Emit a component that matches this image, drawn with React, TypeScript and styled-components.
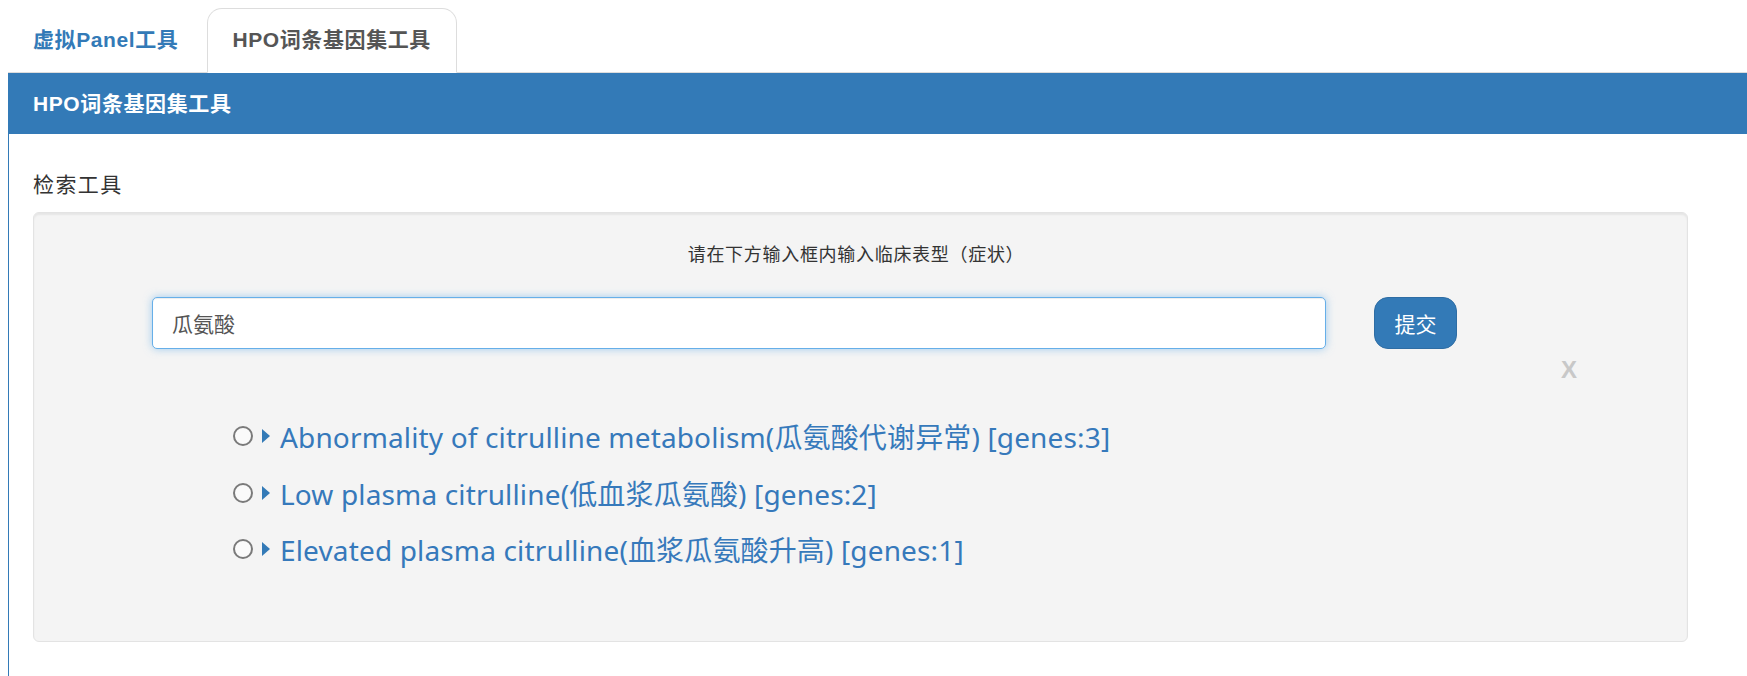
import React from "react";
import styled, { createGlobalStyle } from "styled-components";

const GlobalStyle = createGlobalStyle`
  html, body {
    margin: 0;
    padding: 0;
    background: #fff;
    overflow-x: hidden;
  }
  body {
    font-family: "Liberation Sans", "Noto Sans CJK SC", sans-serif;
    color: #333;
  }
  * { box-sizing: border-box; }
`;

const Page = styled.div`
  padding: 8px 0 0 8px;
  height: 676px;
  overflow: hidden;
`;

const TabList = styled.ul`
  display: flex;
  list-style: none;
  margin: 0;
  padding: 0;
  border-bottom: 1px solid #ddd;
  height: 65px;
`;

const Tab = styled.li<{ $active?: boolean }>`
  margin-right: 3px;
  margin-bottom: -1px;
  padding: 16px 25px 17px 24px;
  height: 65px;
  line-height: 30px;
  font-size: 21px;
  font-weight: bold;
  letter-spacing: 0.6px;
  border: 1px solid ${(p) => (p.$active ? "#ddd" : "transparent")};
  border-bottom-color: transparent;
  border-radius: 15px 15px 0 0;
  background: ${(p) => (p.$active ? "#fff" : "transparent")};
  color: ${(p) => (p.$active ? "#555" : "#337ab7")};
  cursor: pointer;
`;

const Panel = styled.div`
  border-left: 1px solid #337ab7;
`;

const PanelHeading = styled.div`
  background: #337ab7;
  color: #fff;
  height: 61px;
  line-height: 62px;
  padding: 0 24px;
  font-size: 21px;
  font-weight: bold;
  letter-spacing: 0.6px;
`;

const PanelBody = styled.div`
  padding: 36px 59px 60px 24px;
`;

const SectionLabel = styled.div`
  font-size: 21px;
  line-height: 30px;
  letter-spacing: 1.4px;
  color: #333;
  margin-bottom: 12px;
`;

const Well = styled.div`
  background: #f4f4f4;
  border: 1px solid #e3e3e3;
  border-radius: 6px;
  box-shadow: inset 0 2px 2px rgba(0, 0, 0, 0.06);
  padding: 29px 0 63px;
`;

const Instruction = styled.div`
  text-align: center;
  font-size: 18px;
  line-height: 26px;
  letter-spacing: 0.7px;
  color: #333;
  padding-right: 9px;
`;

const SearchRow = styled.div`
  display: flex;
  align-items: center;
  gap: 48px;
  margin: 29px 0 0 118px;
`;

const SearchInput = styled.input`
  width: 1174px;
  height: 52px;
  padding: 0 19px;
  font-family: "Liberation Sans", "Noto Sans CJK SC", sans-serif;
  font-size: 21px;
  color: #555;
  background: #fff;
  border: 1px solid #66afe9;
  border-radius: 5px;
  outline: none;
  box-shadow: inset 0 1px 1px rgba(0, 0, 0, 0.075), 0 0 8px rgba(102, 175, 233, 0.6);
`;

const SubmitButton = styled.button`
  width: 83px;
  height: 52px;
  border: 1px solid #2e6da4;
  border-radius: 14px;
  background: #337ab7;
  color: #fff;
  font-family: "Liberation Sans", "Noto Sans CJK SC", sans-serif;
  font-size: 21px;
  cursor: pointer;
`;

const CloseRow = styled.div`
  display: flex;
  justify-content: flex-end;
  margin: 8px 110px 0 0;
`;

const CloseMark = styled.span`
  font-family: "Liberation Sans", sans-serif;
  font-size: 24px;
  line-height: 26px;
  font-weight: bold;
  color: #c8c8c8;
  cursor: pointer;
`;

const ResultList = styled.ul`
  list-style: none;
  margin: 25px 0 0 199px;
  padding: 0;
`;

const ResultItem = styled.li`
  display: flex;
  align-items: center;
  height: 56.5px;
`;

const Radio = styled.span`
  width: 20px;
  height: 20px;
  border: 2px solid #7a7a7a;
  border-radius: 50%;
  background: #fafafa;
  flex-shrink: 0;
`;

const Caret = styled.span`
  width: 0;
  height: 0;
  margin: 0 10px 0 9px;
  border-top: 7px solid transparent;
  border-bottom: 7px solid transparent;
  border-left: 8px solid #337ab7;
  flex-shrink: 0;
`;

const ResultText = styled.a`
  font-family: "Noto Sans", "Noto Sans CJK SC", sans-serif;
  font-size: 28px;
  letter-spacing: 0.15px;
  color: #3679bb;
  text-decoration: none;
  white-space: nowrap;
  cursor: pointer;
`;

const results = [
  "Abnormality of citrulline metabolism(瓜氨酸代谢异常) [genes:3]",
  "Low plasma citrulline(低血浆瓜氨酸) [genes:2]",
  "Elevated plasma citrulline(血浆瓜氨酸升高) [genes:1]",
];

export default function App() {
  return (
    <>
      <GlobalStyle />
      <Page>
        <TabList>
          <Tab>虚拟Panel工具</Tab>
          <Tab $active>HPO词条基因集工具</Tab>
        </TabList>
        <Panel>
          <PanelHeading>HPO词条基因集工具</PanelHeading>
          <PanelBody>
            <SectionLabel>检索工具</SectionLabel>
            <Well>
              <Instruction>请在下方输入框内输入临床表型（症状）</Instruction>
              <SearchRow>
                <SearchInput defaultValue="瓜氨酸" />
                <SubmitButton>提交</SubmitButton>
              </SearchRow>
              <CloseRow>
                <CloseMark>X</CloseMark>
              </CloseRow>
              <ResultList>
                {results.map((r) => (
                  <ResultItem key={r}>
                    <Radio />
                    <Caret />
                    <ResultText>{r}</ResultText>
                  </ResultItem>
                ))}
              </ResultList>
            </Well>
          </PanelBody>
        </Panel>
      </Page>
    </>
  );
}
